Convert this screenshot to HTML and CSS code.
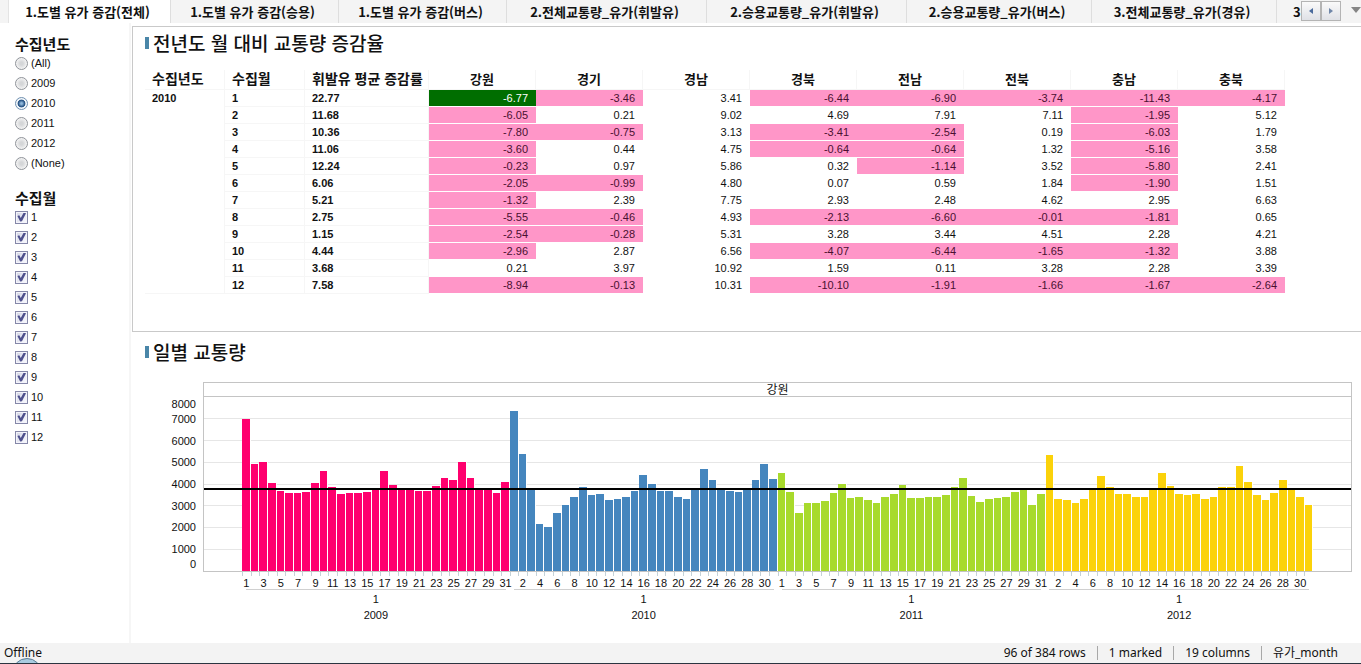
FILE: index.html
```
<!DOCTYPE html>
<html lang="ko">
<head>
<meta charset="utf-8">
<title>유가_month</title>
<link rel="stylesheet" href="styles.css">
</head>
<body>
<header class="tabbar">
  <nav class="tabs" aria-label="페이지">
    <button class="tab tab-active">1.도별 유가 증감(전체)</button>
    <button class="tab">1.도별 유가 증감(승용)</button>
    <button class="tab">1.도별 유가 증감(버스)</button>
    <button class="tab tab-long">2.전체교통량_유가(휘발유)</button>
    <button class="tab tab-long">2.승용교통량_유가(휘발유)</button>
    <button class="tab tab-mid">2.승용교통량_유가(버스)</button>
    <button class="tab tab-mid">3.전체교통량_유가(경유)</button>
    <button class="tab tab-rest">3</button>
  </nav>
  <div class="tab-tools">
    <button class="scroll" aria-label="이전"><svg width="4" height="6" viewBox="0 0 4 6"><path d="M4 0v6L0 3z" fill="#4a6a9c"/></svg></button>
    <button class="scroll" aria-label="다음"><svg width="4" height="6" viewBox="0 0 4 6"><path d="M0 0v6l4-3z" fill="#6f86a8"/></svg></button>
    <button class="more" aria-label="목록"><svg width="10" height="6" viewBox="0 0 10 6"><path d="M0 0h10L5 6z" fill="#858585"/></svg></button>
  </div>
</header>
<div class="workspace">
  <aside class="sidebar">
    <fieldset class="filter">
      <legend>수집년도</legend>
      <label><input type="radio" name="year">(All)</label>
      <label><input type="radio" name="year">2009</label>
      <label><input type="radio" name="year" checked>2010</label>
      <label><input type="radio" name="year">2011</label>
      <label><input type="radio" name="year">2012</label>
      <label><input type="radio" name="year">(None)</label>
    </fieldset>
    <fieldset class="filter">
      <legend>수집월</legend>
      <label><input type="checkbox" checked>1</label>
      <label><input type="checkbox" checked>2</label>
      <label><input type="checkbox" checked>3</label>
      <label><input type="checkbox" checked>4</label>
      <label><input type="checkbox" checked>5</label>
      <label><input type="checkbox" checked>6</label>
      <label><input type="checkbox" checked>7</label>
      <label><input type="checkbox" checked>8</label>
      <label><input type="checkbox" checked>9</label>
      <label><input type="checkbox" checked>10</label>
      <label><input type="checkbox" checked>11</label>
      <label><input type="checkbox" checked>12</label>
    </fieldset>
  </aside>
  <main class="main">
    <section class="panel panel-table">
      <h2>전년도 월 대비 교통량 증감율</h2>
      <table class="rates">
        <colgroup><col class="c-key"><col class="c-key"><col class="c-avg"><col span="8"></colgroup>
        <thead>
          <tr><th>수집년도</th><th>수집월</th><th>휘발유 평균 증감률</th><th class="r">강원</th><th class="r">경기</th><th class="r">경남</th><th class="r">경북</th><th class="r">전남</th><th class="r">전북</th><th class="r">충남</th><th class="r">충북</th></tr>
        </thead>
        <tbody>
          <tr><th rowspan="12">2010</th><th>1</th><th>22.77</th><td class="mark">-6.77</td><td class="neg">-3.46</td><td>3.41</td><td class="neg">-6.44</td><td class="neg">-6.90</td><td class="neg">-3.74</td><td class="neg">-11.43</td><td class="neg">-4.17</td></tr>
          <tr><th>2</th><th>11.68</th><td class="neg">-6.05</td><td>0.21</td><td>9.02</td><td>4.69</td><td>7.91</td><td>7.11</td><td class="neg">-1.95</td><td>5.12</td></tr>
          <tr><th>3</th><th>10.36</th><td class="neg">-7.80</td><td class="neg">-0.75</td><td>3.13</td><td class="neg">-3.41</td><td class="neg">-2.54</td><td>0.19</td><td class="neg">-6.03</td><td>1.79</td></tr>
          <tr><th>4</th><th>11.06</th><td class="neg">-3.60</td><td>0.44</td><td>4.75</td><td class="neg">-0.64</td><td class="neg">-0.64</td><td>1.32</td><td class="neg">-5.16</td><td>3.58</td></tr>
          <tr><th>5</th><th>12.24</th><td class="neg">-0.23</td><td>0.97</td><td>5.86</td><td>0.32</td><td class="neg">-1.14</td><td>3.52</td><td class="neg">-5.80</td><td>2.41</td></tr>
          <tr><th>6</th><th>6.06</th><td class="neg">-2.05</td><td class="neg">-0.99</td><td>4.80</td><td>0.07</td><td>0.59</td><td>1.84</td><td class="neg">-1.90</td><td>1.51</td></tr>
          <tr><th>7</th><th>5.21</th><td class="neg">-1.32</td><td>2.39</td><td>7.75</td><td>2.93</td><td>2.48</td><td>4.62</td><td>2.95</td><td>6.63</td></tr>
          <tr><th>8</th><th>2.75</th><td class="neg">-5.55</td><td class="neg">-0.46</td><td>4.93</td><td class="neg">-2.13</td><td class="neg">-6.60</td><td class="neg">-0.01</td><td class="neg">-1.81</td><td>0.65</td></tr>
          <tr><th>9</th><th>1.15</th><td class="neg">-2.54</td><td class="neg">-0.28</td><td>5.31</td><td>3.28</td><td>3.44</td><td>4.51</td><td>2.28</td><td>4.21</td></tr>
          <tr><th>10</th><th>4.44</th><td class="neg">-2.96</td><td>2.87</td><td>6.56</td><td class="neg">-4.07</td><td class="neg">-6.44</td><td class="neg">-1.65</td><td class="neg">-1.32</td><td>3.88</td></tr>
          <tr><th>11</th><th>3.68</th><td>0.21</td><td>3.97</td><td>10.92</td><td>1.59</td><td>0.11</td><td>3.28</td><td>2.28</td><td>3.39</td></tr>
          <tr><th>12</th><th>7.58</th><td class="neg">-8.94</td><td class="neg">-0.13</td><td>10.31</td><td class="neg">-10.10</td><td class="neg">-1.91</td><td class="neg">-1.66</td><td class="neg">-1.67</td><td class="neg">-2.64</td></tr>
        </tbody>
      </table>
    </section>
    <section class="panel panel-chart">
      <h2>일별 교통량</h2>
      <div class="chart">
        <div class="y-axis">
          <span>8000</span>
          <div class="y-mid"><span>7000</span><span>6000</span><span>5000</span><span>4000</span><span>3000</span><span>2000</span><span>1000</span></div>
          <span>0</span>
        </div>
        <div class="chart-body">
          <div class="frame">
            <div class="trellis">강원</div>
            <div class="plot">
              <div class="gridlines"><i></i><i></i><i></i><i></i><i></i><i></i><i></i><i></i></div>
              <div class="bars" id="bars"></div>
              <div class="average"></div>
            </div>
          </div>
          <div class="x-axis" id="x-axis"></div>
        </div>
      </div>
    </section>
  </main>
</div>
<footer class="status">
  <span class="offline">Offline</span>
  <span class="orb"></span>
  <span class="cell">96 of 384 rows</span>
  <span class="cell">1 marked</span>
  <span class="cell">19 columns</span>
  <span class="cell">유가_month</span>
</footer>
<script src="chart.js"></script>
</body>
</html>
```
FILE: styles.css
```
* { box-sizing: border-box; }
body {
  margin: 0;
  min-height: 100vh;
  display: flex;
  flex-direction: column;
  background: #fff;
  color: #111;
  font: 11px/14px "Liberation Sans", "Noto Sans CJK KR", sans-serif;
}
button { border: 0; padding: 0; background: none; color: inherit; font: inherit; }

.tabbar { display: flex; height: 23px; background: #f4f4f4; }
.tabs { display: flex; flex: 1; min-width: 0; overflow: hidden; padding-left: 8px; }
.tab {
  flex: none;
  width: 168px;
  padding-right: 4px;
  border-right: 1px solid #dedede;
  font: bold 13px/23px "Noto Sans CJK KR", sans-serif;
  white-space: nowrap;
}
.tab-active { width: 163px; background: #fff; border-left: 1px solid #e4e4e4; }
.tab-long { width: 200px; }
.tab-mid { width: 185px; }
.tab-rest { flex: 1; width: auto; padding: 0 0 0 16px; border: 0; text-align: left; }
.tab-tools { display: flex; flex: none; width: 60px; }
.scroll {
  display: flex; align-items: center; justify-content: center;
  width: 20px; height: 20px; margin-top: 1px;
  border: 1px solid #b4b4b4;
  background: linear-gradient(#fafafa, #dfe1e6);
}
.more { display: flex; align-items: center; justify-content: flex-end; flex: 1; height: 20px; }

.workspace { display: flex; flex: 1; }
.sidebar { flex: none; width: 131px; padding: 11px 0 0 15px; border-right: 2px solid #f6f6f6; }
.filter { border: 0; margin: 0 0 15px; padding: 0; }
.filter legend { padding: 0; font: bold 15px/19px "Noto Sans CJK KR", sans-serif; }
.filter label { display: flex; align-items: center; gap: 3px; height: 20px; }
.filter input { appearance: none; position: relative; flex: none; width: 13px; height: 13px; margin: 0; border: 1px solid #8f9399; }
.filter input[type="radio"] { border-radius: 50%; background: radial-gradient(#d4d6d8 20%, #f4f4f4 70%); }
.filter input[type="radio"]:checked { border-color: #6f8fb0; background: radial-gradient(#8fb8dc 10%, #1d4a7c 45%, #f2f7fb 55%); }
.filter input[type="checkbox"] { border-color: #8587a8; background: linear-gradient(135deg, #d2d4e4, #fbfbff); box-shadow: inset 0 0 0 1px #f4f4fb; }
.filter input[type="checkbox"]::after {
  content: "";
  position: absolute; inset: 1px;
  background: #4d4f8c;
  clip-path: polygon(5% 38%, 25% 30%, 42% 60%, 75% 0, 100% 8%, 55% 96%, 35% 100%);
}

.main { display: flex; flex: 1; flex-direction: column; min-width: 0; margin-left: 1px; }
.panel { padding: 6px 9px 0 12px; }
.panel-table { margin-top: 3px; padding-bottom: 37px; border: solid #c9c9c9; border-width: 1px 0 1px 1px; }
.panel-chart { padding-top: 10px; padding-left: 13px; }
h2 {
  display: flex; align-items: center; gap: 4px;
  margin: 0;
  font: 500 19px/20px "Noto Sans CJK KR", sans-serif;
}
h2::before { content: ""; width: 4px; height: 12px; background: #4a86a8; }

.rates { width: calc(100% - 67px); margin-top: 17px; table-layout: fixed; border-collapse: separate; border-spacing: 0; }
.c-key { width: 80px; }
.c-avg { width: 124px; }
.rates th, .rates td { height: 17px; padding: 0 8px 0 7px; border-bottom: 1px solid #fff; line-height: 16px; }
.rates th { padding-right: 0; border-right: 1px solid #f6f6f6; border-bottom-color: #f6f6f6; text-align: left; vertical-align: top; white-space: nowrap; }
.rates thead th { height: 20px; font: bold 14px/17px "Noto Sans CJK KR", sans-serif; }
.rates thead .r { padding: 0; font-size: 13px; text-align: center; }
.rates td { text-align: right; }
.rates .neg { background: #ff96c8; background-clip: padding-box; color: #4a1030; }
.rates .mark { background: #006e00; background-clip: padding-box; color: #fff; }

.chart { display: flex; margin-top: 20px; }
.y-axis { display: flex; flex-direction: column; flex: none; width: 58px; height: 189px; padding: 15px 7px 0 0; text-align: right; }
.y-mid { display: flex; flex: 1; flex-direction: column; justify-content: space-between; padding: 1px 0; }
.chart-body { flex: 1; min-width: 0; }
.frame { border: 1px solid #c4c4c4; }
.trellis { height: 14px; border-bottom: 1px solid #c4c4c4; font: 12px/11px "Noto Sans CJK KR", sans-serif; text-align: center; }
.plot { position: relative; display: grid; height: 174px; }
.gridlines, .bars { grid-area: 1 / 1; }
.gridlines { display: flex; flex-direction: column; }
.gridlines i { flex: 1; border-bottom: 1px solid #e6e6e6; }
.gridlines i:last-child { border: 0; }
.bars { position: relative; display: flex; align-items: flex-end; padding: 0 38px; }
.bar { flex: 1; border-right: 1px solid #fff; }
.y2009 { background: #ff006e; }
.y2010 { background: #4586be; }
.y2011 { background: #a8da2c; }
.y2012 { background: #fbd20a; }
.average { position: absolute; left: 0; right: 0; bottom: 81px; height: 2px; background: #000; }

.x-axis { display: flex; padding: 0 39px; }
.year { flex: 1; min-width: 0; text-align: center; }
.days { display: flex; }
.day { display: flex; justify-content: center; flex: 1; width: 0; height: 17px; padding-top: 4px; background: linear-gradient(#c4d2d8, #c4d2d8) left top / 1px 4px no-repeat; }
.month, .year-name { line-height: 16px; }
.month { margin: 0 4px; padding-top: 1px; border-top: 1px solid #d0d0d0; }

.status {
  position: relative;
  display: flex; align-items: center;
  height: 21px; padding: 0 12px 0 4px;
  overflow: hidden;
  background: #f3f3f3;
  border-bottom: 1px solid #2a3440;
  font: 12px/20px "Noto Sans", "Noto Sans CJK KR", sans-serif;
}
.offline { margin-right: auto; }
.orb { position: absolute; left: 12px; top: 15px; width: 30px; height: 30px; border-radius: 50%; border: 1px solid #5c7f96; background: #a9cbe0; }
.cell { padding: 0 11px; line-height: 14px; }
.cell + .cell { border-left: 1px solid #a8a8a8; }
```
FILE: chart.js
```
const traffic = {
  2009: [6990, 4940, 4990, 4060, 3700, 3600, 3600, 3650, 4060, 4620, 3880, 3560, 3600, 3600, 3650, 3790, 4620, 3970, 3790, 3790, 3700, 3700, 3930, 4290, 4200, 4990, 4290, 3740, 3790, 3600, 4110],
  2010: [7370, 5400, 3740, 2180, 2040, 2680, 3050, 3420, 3880, 3510, 3560, 3280, 3330, 3420, 3700, 4430, 4020, 3700, 3700, 3420, 3330, 3790, 4710, 4200, 3740, 3700, 3650, 3740, 4200, 4940, 4250],
  2011: [4520, 3650, 2680, 3140, 3140, 3240, 3600, 4020, 3370, 3420, 3280, 3140, 3420, 3560, 3970, 3370, 3370, 3420, 3420, 3510, 3880, 4290, 3470, 3190, 3330, 3370, 3420, 3650, 3740, 3050, 3560],
  2012: [5350, 3330, 3280, 3140, 3330, 3790, 4390, 3880, 3560, 3560, 3420, 3420, 3740, 4520, 3930, 3560, 3510, 3560, 3330, 3420, 3880, 3880, 4850, 4110, 3510, 3280, 3600, 4200, 3790, 3420, 3050]
};
const MAX = 8000;
const bars = document.getElementById("bars");
const axis = document.getElementById("x-axis");
let index = 0;

function add(parent, className, text) {
  const el = document.createElement("div");
  el.className = className;
  if (text) el.textContent = text;
  parent.appendChild(el);
  return el;
}

for (const [year, values] of Object.entries(traffic)) {
  const group = add(axis, "year");
  const days = add(group, "days");
  values.forEach((value, i) => {
    add(bars, "bar y" + year).style.height = (value / MAX * 100) + "%";
    // every second day is labelled, counted across all the years
    add(days, "day", index % 2 === 0 ? String(i + 1) : "");
    index += 1;
  });
  add(group, "month", "1");
  add(group, "year-name", year);
}
```
